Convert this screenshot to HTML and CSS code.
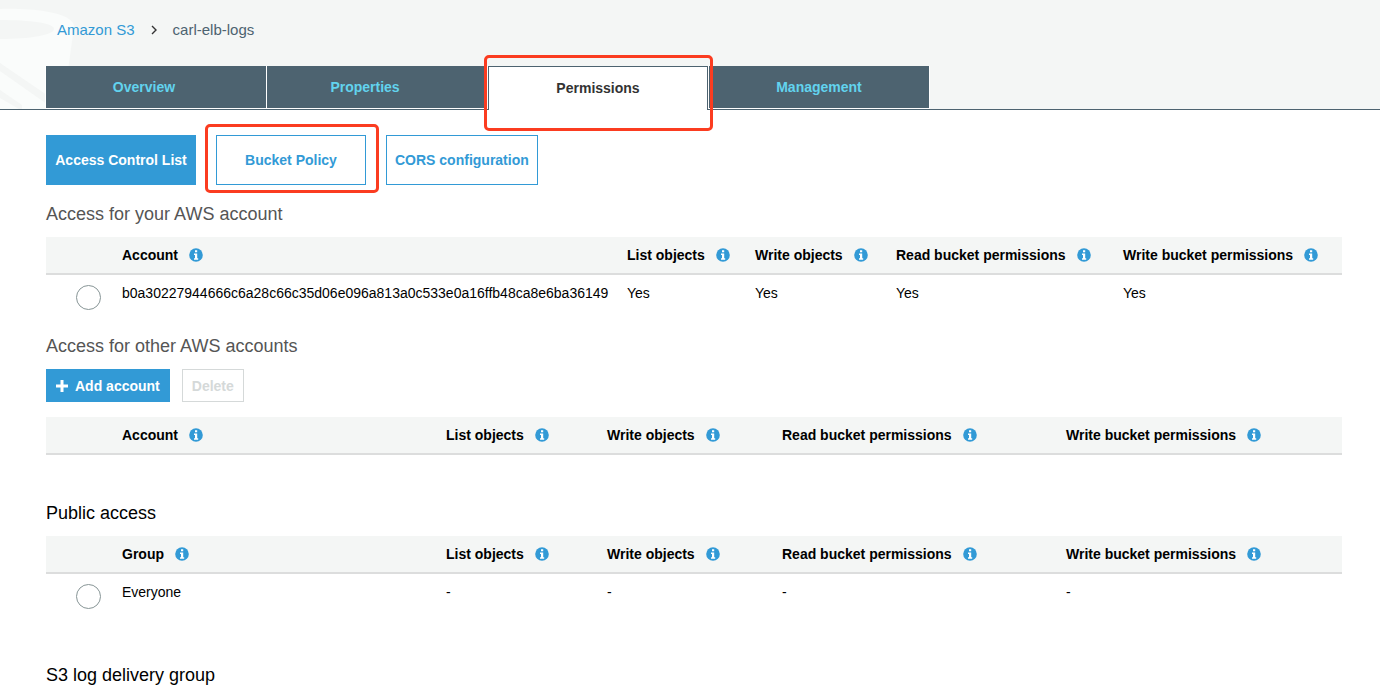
FILE: index.html
```html
<!DOCTYPE html>
<html lang="en">
<head>
<meta charset="utf-8">
<title>Amazon S3 - carl-elb-logs</title>
<link rel="stylesheet" href="styles.css">
</head>
<body>
<svg class="defs" aria-hidden="true">
  <symbol id="info" viewBox="0 0 14 14">
    <circle cx="7" cy="7" r="6.8" fill="#329ad6"/>
    <path d="M6 2.2h2.2v2.1H6zM5 5.4h3.2v4.8h1v1.5H5v-1.5h1V6.9H5z" fill="#fff"/>
  </symbol>
</svg>
<header class="header">
  <svg class="watermark" viewBox="0 0 80 109" aria-hidden="true">
    <path d="M0 9C30 8 60 12 69 19Q74 22 74 27L68 70L63 109H0z" fill="#fafcfb"/>
    <path d="M0 20C30 20 54 23 54 29S30 39 0 39z" fill="#f4f6f5"/>
    <path d="M0 63L60 104V109H54L0 71zM0 90L22 105V109H19L0 98z" fill="#f4f6f5"/>
  </svg>
  <nav class="crumbs" aria-label="Breadcrumb">
    <a href="#">Amazon S3</a>
    <svg width="6" height="10" viewBox="0 0 6 10" aria-hidden="true"><path d="M1 1l4 4-4 4" fill="none" stroke="#333" stroke-width="1.4"/></svg>
    <span>carl-elb-logs</span>
  </nav>
  <nav class="tabs">
    <button class="tab inset">Overview</button>
    <button class="tab inset">Properties</button>
    <button class="tab active marked">Permissions</button>
    <button class="tab">Management</button>
  </nav>
</header>
<main class="main">
  <div class="sections">
    <button class="section primary">Access Control List</button>
    <button class="section marked">Bucket Policy</button>
    <button class="section">CORS configuration</button>
  </div>

  <h2 class="heading muted">Access for your AWS account</h2>
  <table class="grants own">
    <colgroup><col class="pick"><col><col class="list"><col class="write"><col class="read-acp"><col class="write-acp"></colgroup>
    <thead><tr>
      <td></td>
      <th>Account<svg class="info"><use href="#info"/></svg></th>
      <th>List objects<svg class="info"><use href="#info"/></svg></th>
      <th>Write objects<svg class="info"><use href="#info"/></svg></th>
      <th>Read bucket permissions<svg class="info"><use href="#info"/></svg></th>
      <th>Write bucket permissions<svg class="info"><use href="#info"/></svg></th>
    </tr></thead>
    <tbody><tr>
      <td class="choice"><input type="radio" name="grantee" aria-labelledby="owner"></td>
      <td id="owner">b0a30227944666c6a28c66c35d06e096a813a0c533e0a16ffb48ca8e6ba36149</td>
      <td>Yes</td><td>Yes</td><td>Yes</td><td>Yes</td>
    </tr></tbody>
  </table>

  <h2 class="heading muted">Access for other AWS accounts</h2>
  <div class="actions">
    <button class="action add"><svg width="12" height="12" viewBox="0 0 12 12" aria-hidden="true"><path d="M4.5 0h3v4.5H12v3H7.5V12h-3V7.5H0v-3h4.5z" fill="#fff"/></svg>Add account</button>
    <button class="action" disabled>Delete</button>
  </div>
  <table class="grants empty">
    <colgroup><col class="pick"><col><col class="list"><col class="write"><col class="read-acp"><col class="write-acp"></colgroup>
    <thead><tr>
      <td></td>
      <th>Account<svg class="info"><use href="#info"/></svg></th>
      <th>List objects<svg class="info"><use href="#info"/></svg></th>
      <th>Write objects<svg class="info"><use href="#info"/></svg></th>
      <th>Read bucket permissions<svg class="info"><use href="#info"/></svg></th>
      <th>Write bucket permissions<svg class="info"><use href="#info"/></svg></th>
    </tr></thead>
  </table>

  <h2 class="heading">Public access</h2>
  <table class="grants public">
    <colgroup><col class="pick"><col><col class="list"><col class="write"><col class="read-acp"><col class="write-acp"></colgroup>
    <thead><tr>
      <td></td>
      <th>Group<svg class="info"><use href="#info"/></svg></th>
      <th>List objects<svg class="info"><use href="#info"/></svg></th>
      <th>Write objects<svg class="info"><use href="#info"/></svg></th>
      <th>Read bucket permissions<svg class="info"><use href="#info"/></svg></th>
      <th>Write bucket permissions<svg class="info"><use href="#info"/></svg></th>
    </tr></thead>
    <tbody><tr>
      <td class="choice"><input type="radio" name="grantee" aria-labelledby="everyone"></td>
      <td id="everyone">Everyone</td>
      <td>-</td><td>-</td><td>-</td><td>-</td>
    </tr></tbody>
  </table>

  <h2 class="heading">S3 log delivery group</h2>
</main>
</body>
</html>
```
FILE: styles.css
```css
* { box-sizing: border-box; }
body {
  margin: 0;
  background: #fff;
  color: #000;
  font: 14px/20px "Liberation Sans", Arial, sans-serif;
}
button { font: inherit; font-weight: bold; cursor: pointer; white-space: nowrap; }
button:disabled { cursor: default; }
.defs { display: none; }

.header {
  position: relative;
  background: #f4f6f5;
  border-bottom: 1px solid #4d6370;
}
.watermark { position: absolute; left: 0; top: 0; width: 80px; height: 109px; }
.crumbs {
  position: relative;
  display: flex;
  align-items: center;
  gap: 16px;
  padding: 20px 57px 26px;
  font-size: 15px;
  color: #4d6370;
}
.crumbs a { color: #329ad6; text-decoration: none; }
.tabs {
  position: relative;
  display: flex;
  gap: 1px;
  margin: 0 46px;
  height: 43px;
}
.tab {
  position: relative;
  width: 220px;
  height: 42px;
  padding: 0;
  border: 0;
  background: #4d6370;
  color: #62d3ee;
  box-shadow: 0 0 0 1px #fff;
  clip-path: inset(0 -1px -1px -1px);
}
.tab.inset { padding-right: 24px; }
.tab.active {
  z-index: 1;
  height: 44px;
  padding-bottom: 2px;
  border: 1px solid #4d6370;
  border-bottom: 0;
  background: #fff;
  color: #333;
  box-shadow: none;
  clip-path: none;
}

/* Red callout ring around a control */
.marked::after {
  content: "";
  position: absolute;
  border: 3px solid #fb3c20;
  border-radius: 5px;
  pointer-events: none;
}
.tab.marked::after { inset: -12px -6px -21px -5px; }
.section.marked::after { inset: -12px -14px -9px -12px; }

.main { padding: 25px 38px 0 46px; }
.sections { display: flex; gap: 20px; margin-bottom: 17px; }
.section {
  position: relative;
  min-width: 150px;
  height: 50px;
  padding: 0 8px;
  border: 1px solid #329ad6;
  background: #fff;
  color: #329ad6;
}
.section.primary { background: #329ad6; color: #fff; }

.heading { margin: 0 0 11px; font-size: 18px; line-height: 24px; font-weight: normal; }
.heading.muted { color: #555; }

.grants { width: 100%; border-collapse: collapse; table-layout: fixed; }
.grants th, .grants td { padding: 8px 0; text-align: left; vertical-align: top; }
.grants thead { background: #f4f6f5; border-bottom: 2px solid #dcdddd; }
.grants .choice { padding: 10px 0 9px 30px; }
.info { width: 14px; height: 14px; margin-left: 11px; vertical-align: -2px; }
.pick { width: 76px; }
.own { margin-bottom: 15px; }
.own .list { width: 128px; }
.own .write { width: 141px; }
.own .read-acp { width: 227px; }
.own .write-acp { width: 219px; }
.list { width: 161px; }
.write { width: 175px; }
.read-acp { width: 284px; }
.write-acp { width: 276px; }
.empty { margin-bottom: 46px; }
.public { margin-bottom: 45px; }

input[type="radio"] {
  appearance: none;
  display: block;
  width: 25px;
  height: 25px;
  margin: 0;
  border: 1px solid #879596;
  border-radius: 50%;
  background: #fff;
}
input[type="radio"]:checked { box-shadow: inset 0 0 0 5px #fff; background: #329ad6; }

.actions { display: flex; gap: 12px; margin-bottom: 15px; }
.action {
  height: 33px;
  padding: 0 9px;
  border: 1px solid #d5d9d9;
  background: #fff;
  color: #d5d9d9;
}
.action.add {
  display: flex;
  align-items: center;
  gap: 7px;
  border-color: #329ad6;
  background: #329ad6;
  color: #fff;
}
```
